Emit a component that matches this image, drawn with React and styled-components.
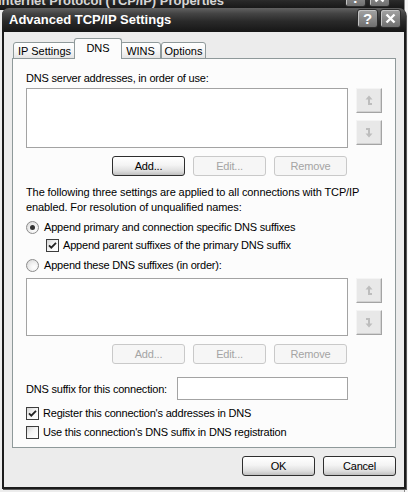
import React from 'react'
import styled, { createGlobalStyle } from 'styled-components'

const GlobalStyle = createGlobalStyle`
    html, body {
        margin: 0;
        padding: 0;
    }
    body {
        width: 408px;
        height: 492px;
        overflow: hidden;
        background: #ffffff;
        font-family: "Liberation Sans", Arial, sans-serif;
        font-size: 11px;
        color: #000;
    }
`

const Desktop = styled.div`
    position: relative;
    width: 408px;
    height: 492px;
    overflow: hidden;
    background: #f6f6f6;
`

/* window behind the dialog, only its edges peek out */
const BackWindow = styled.div`
    position: absolute;
    left: -12px;
    top: -30px;
    width: 416px;
    height: 540px;
    display: flex;
    flex-direction: column;
    background: #ececec;
    border-right: 1px solid #8a8a8a;
    border-top-right-radius: 7px;
    overflow: hidden;
`

const BackTitle = styled.div`
    height: 38px;
    flex: none;
    display: flex;
    align-items: flex-end;
    padding: 0 14px 2px 10px;
    background: linear-gradient(to bottom, #5e5e5e 0%, #3d3d3d 60%, #262626 80%, #141414 100%);
    color: #d6d6d6;
    font-weight: bold;
    font-size: 13px;
    line-height: 14px;
`

const BackButtons = styled.div`
    margin-left: auto;
    display: flex;
    gap: 3px;
    margin-bottom: 1px;
`

const BackBody = styled.div`
    padding: 480px 0 0 19px;
    line-height: 14px;
`

const Dialog = styled.div`
    position: absolute;
    left: 2px;
    top: 8px;
    width: 404px;
    height: 481px;
    display: flex;
    flex-direction: column;
    background: #1b1b1b;
    border-radius: 7px 7px 0 0;
    box-shadow: 1px 1px 0 #5a5a5a;
`

const TitleBar = styled.div`
    height: 24px;
    flex: none;
    display: flex;
    align-items: flex-start;
    padding: 0 5px 0 7px;
    border-radius: 7px 7px 0 0;
    background: linear-gradient(to bottom, #626262 0%, #454545 22%, #2a2a2a 55%, #161616 100%);
`

const TitleText = styled.div`
    margin-top: 5px;
    color: #ffffff;
    font-weight: bold;
    font-size: 13px;
    line-height: 14px;
`

const TitleButtons = styled.div`
    margin-left: auto;
    margin-top: 1px;
    display: flex;
    gap: 2px;
`

const TitleButton = styled.div`
    width: 21px;
    height: 19px;
    box-sizing: border-box;
    display: flex;
    align-items: center;
    justify-content: center;
    border: 1px solid #2c2c2c;
    border-radius: 3px;
    background: linear-gradient(to bottom, #a3a3a3 0%, #8c8c8c 45%, #6e6e6e 100%);
    box-shadow: inset 1px 1px 0 #c4c4c4;
    color: #ffffff;
    font-weight: bold;
    font-size: 15px;
    line-height: 15px;
`

const Body = styled.div`
    flex: 1;
    margin: 0 2px 2px;
    padding: 6px 8px 0;
    background: #ececec;
    display: flex;
    flex-direction: column;
`

const TabStrip = styled.div`
    height: 21px;
    display: flex;
    align-items: flex-end;
    padding-left: 1px;
    margin-bottom: -1px;
    position: relative;
    z-index: 1;
`

const Tab = styled.div`
    width: ${props => props.$width}px;
    height: ${props => props.$active ? '21px' : '17px'};
    box-sizing: border-box;
    margin: 0 ${props => props.$active ? '-2px' : '0'};
    display: flex;
    align-items: center;
    justify-content: center;
    border: 1px solid #8f999a;
    border-bottom: ${props => props.$active ? 'none' : '1px solid #8f999a'};
    border-radius: 3px 3px 0 0;
    background: ${props => props.$active
        ? '#fcfcfc'
        : 'linear-gradient(to bottom, #ffffff 0%, #f6f6f6 55%, #e4e4e4 100%)'};
    position: relative;
    z-index: ${props => props.$active ? 2 : 1};
    font-size: 11px;
    line-height: 14px;
    padding-bottom: ${props => props.$active ? '2px' : '0'};
`

const Panel = styled.div`
    height: 390px;
    box-sizing: border-box;
    border: 1px solid #8f999a;
    background: #fcfcfc;
    padding: 12px 13px 0 13px;
    display: flex;
    flex-direction: column;
`

const Label = styled.div`
    line-height: 14px;
    letter-spacing: -0.2px;
    white-space: nowrap;
`

const ListRow = styled.div`
    display: flex;
    gap: 8px;
    margin-top: ${props => props.$top}px;
`

const ListBox = styled.div`
    width: 322px;
    height: ${props => props.$height}px;
    box-sizing: border-box;
    border: 1px solid #a3a3a3;
    background: #ffffff;
`

const ArrowColumn = styled.div`
    display: flex;
    flex-direction: column;
    gap: 7px;
`

const ArrowButton = styled.div`
    width: 26px;
    height: 25px;
    box-sizing: border-box;
    display: flex;
    align-items: center;
    justify-content: center;
    background: #e8e8e8;
    border-top: 1px solid #f4f4f4;
    border-left: 1px solid #f4f4f4;
    border-right: 1px solid #a4a4a4;
    border-bottom: 1px solid #a4a4a4;
    box-shadow: inset -1px -1px 0 #d2d2d2;
`

const ButtonRow = styled.div`
    width: 322px;
    box-sizing: border-box;
    padding-right: 1px;
    display: flex;
    justify-content: flex-end;
    gap: 8px;
    margin-top: 8px;
`

const PushButton = styled.div`
    width: 73px;
    height: 20px;
    box-sizing: border-box;
    display: flex;
    align-items: center;
    justify-content: center;
    border-radius: 3px;
    letter-spacing: -0.2px;
    border: 1px solid ${props => props.$disabled ? '#c9c9c9' : '#2e2e2e'};
    color: ${props => props.$disabled ? '#a4a4a4' : '#000000'};
    background: ${props => props.$disabled
        ? '#f6f6f6'
        : 'linear-gradient(to bottom, #ffffff 0%, #f4f4f4 45%, #dedede 78%, #bfbfbf 100%)'};
`

const Paragraph = styled.div`
    margin-top: 9px;
    line-height: 15px;
    letter-spacing: -0.1px;
    white-space: nowrap;
`

const OptionRow = styled.div`
    display: flex;
    align-items: center;
    gap: ${props => props.$gap || 5}px;
    height: 16px;
    margin-top: ${props => props.$top}px;
    margin-left: ${props => props.$indent || 0}px;
    letter-spacing: -0.2px;
    white-space: nowrap;
`

const Radio = styled.div`
    width: 13px;
    height: 13px;
    box-sizing: border-box;
    flex: none;
    border: 1px solid #8c8c8c;
    border-radius: 50%;
    background: radial-gradient(circle at 65% 65%, #ffffff 0%, #f2f2f2 40%, #d2d2d2 100%);
    display: flex;
    align-items: center;
    justify-content: center;

    &::after {
        content: '';
        width: 5px;
        height: 5px;
        border-radius: 50%;
        background: ${props => props.$checked ? '#333333' : 'transparent'};
    }
`

const CheckBox = styled.div`
    width: 13px;
    height: 13px;
    box-sizing: border-box;
    flex: none;
    border: 1px solid #3d3d3d;
    background: linear-gradient(135deg, #d4d4d4 0%, #f4f4f4 45%, #ffffff 100%);
    display: flex;
    align-items: center;
    justify-content: center;
`

const SuffixRow = styled.div`
    width: 322px;
    display: flex;
    align-items: center;
    justify-content: space-between;
    margin-top: 13px;
    letter-spacing: -0.2px;
    white-space: nowrap;
`

const TextInput = styled.div`
    width: 171px;
    height: 23px;
    box-sizing: border-box;
    border: 1px solid #a3a3a3;
    background: #ffffff;
`

const Footer = styled.div`
    display: flex;
    justify-content: flex-end;
    gap: 8px;
    margin-top: 8px;
`

const UpIcon = () => (
    <svg width='8' height='11' viewBox='0 0 8 11'>
        <path d='M0.5 4.5 L4 0.5 L7.5 4.5 Z' fill='#bdbdbd' />
        <rect x='3' y='4' width='2' height='6' fill='#bdbdbd' />
        <rect x='3' y='8' width='4' height='2' fill='#bdbdbd' />
    </svg>
)

const DownIcon = () => (
    <svg width='8' height='11' viewBox='0 0 8 11'>
        <rect x='1' y='1' width='4' height='2' fill='#bdbdbd' />
        <rect x='3' y='1' width='2' height='6' fill='#bdbdbd' />
        <path d='M0.5 6.5 L4 10.5 L7.5 6.5 Z' fill='#bdbdbd' />
    </svg>
)

const CheckMark = () => (
    <svg width='11' height='11' viewBox='0 0 11 11'>
        <path d='M2 5.3 L4.3 7.7 L9 2.8' stroke='#222222' strokeWidth='1.8' fill='none' />
    </svg>
)

const CloseGlyph = () => (
    <svg width='11' height='11' viewBox='0 0 11 11'>
        <path d='M1.5 1.5 L9.5 9.5 M9.5 1.5 L1.5 9.5' stroke='#ffffff' strokeWidth='2.4' />
    </svg>
)

const SuffixList = ({ top, height, enabled }) => (
    <>
        <ListRow $top={top}>
            <ListBox $height={height} />
            <ArrowColumn>
                <ArrowButton><UpIcon /></ArrowButton>
                <ArrowButton><DownIcon /></ArrowButton>
            </ArrowColumn>
        </ListRow>
        <ButtonRow>
            <PushButton $disabled={!enabled}>{'Add...'}</PushButton>
            <PushButton $disabled>{'Edit...'}</PushButton>
            <PushButton $disabled>{'Remove'}</PushButton>
        </ButtonRow>
    </>
)

const tabs = [
    { name: 'IP Settings', width: 63 },
    { name: 'DNS', width: 48, active: true },
    { name: 'WINS', width: 41 },
    { name: 'Options', width: 45 },
]

const App = () => {
    return (
        <Desktop>
            <GlobalStyle />
            <BackWindow>
                <BackTitle>
                    {'Internet Protocol (TCP/IP) Properties'}
                    <BackButtons>
                        <TitleButton>?</TitleButton>
                        <TitleButton><CloseGlyph /></TitleButton>
                    </BackButtons>
                </BackTitle>
                <BackBody>{'Use the following DNS server addresses:'}</BackBody>
            </BackWindow>

            <Dialog>
                <TitleBar>
                    <TitleText>{'Advanced TCP/IP Settings'}</TitleText>
                    <TitleButtons>
                        <TitleButton>?</TitleButton>
                        <TitleButton><CloseGlyph /></TitleButton>
                    </TitleButtons>
                </TitleBar>
                <Body>
                    <TabStrip>
                        {tabs.map(tab => (
                            <Tab key={tab.name} $width={tab.width} $active={tab.active}>{tab.name}</Tab>
                        ))}
                    </TabStrip>
                    <Panel>
                        <Label>{'DNS server addresses, in order of use:'}</Label>
                        <SuffixList top={3} height={60} enabled />

                        <Paragraph>
                            {'The following three settings are applied to all connections with TCP/IP'}
                            <br />
                            {'enabled. For resolution of unqualified names:'}
                        </Paragraph>
                        <OptionRow $top={4} $gap={5}>
                            <Radio $checked />
                            {'Append primary and connection specific DNS suffixes'}
                        </OptionRow>
                        <OptionRow $top={2} $indent={20} $gap={4}>
                            <CheckBox><CheckMark /></CheckBox>
                            {'Append parent suffixes of the primary DNS suffix'}
                        </OptionRow>
                        <OptionRow $top={4} $gap={5}>
                            <Radio />
                            {'Append these DNS suffixes (in order):'}
                        </OptionRow>
                        <SuffixList top={5} height={58} />

                        <SuffixRow>
                            {'DNS suffix for this connection:'}
                            <TextInput />
                        </SuffixRow>
                        <OptionRow $top={5} $gap={4}>
                            <CheckBox><CheckMark /></CheckBox>
                            {"Register this connection's addresses in DNS"}
                        </OptionRow>
                        <OptionRow $top={3} $gap={4}>
                            <CheckBox />
                            {"Use this connection's DNS suffix in DNS registration"}
                        </OptionRow>
                    </Panel>
                    <Footer>
                        <PushButton>{'OK'}</PushButton>
                        <PushButton>{'Cancel'}</PushButton>
                    </Footer>
                </Body>
            </Dialog>
        </Desktop>
    )
}

export default App
